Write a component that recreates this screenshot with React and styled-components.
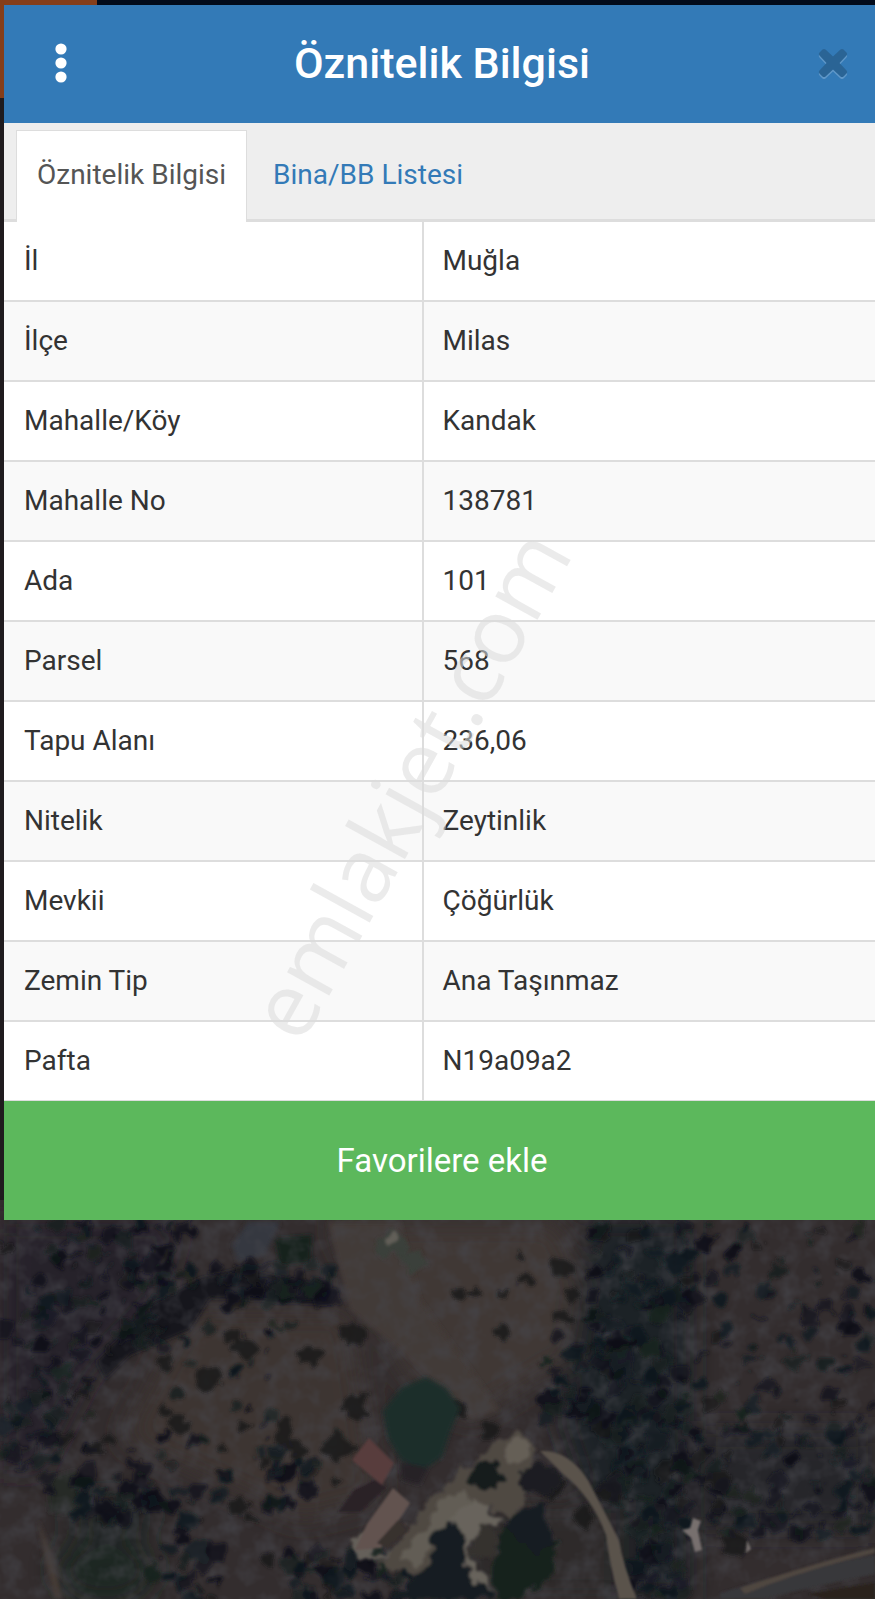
import React from "react";
import styled, { createGlobalStyle } from "styled-components";

const GlobalStyle = createGlobalStyle`
  *, *::before, *::after { box-sizing: border-box; }
  body {
    margin: 0;
    background: #1d191c;
    color: #333;
    font-family: Roboto, "Open Sans", sans-serif;
    font-size: 28px;
    line-height: 40px;
  }
`;

const Page = styled.div`
  position: relative;
  min-height: 100vh;
  overflow: hidden;
  padding: 5px 0 0 4px;
`;

const MapLayer = styled.svg`
  position: absolute;
  inset: 0;
  width: 100%;
  height: 100%;
`;

const Dialog = styled.section`
  position: relative;
  margin-right: -5px;
  background: #fff;
`;

const Header = styled.header`
  display: grid;
  grid-template-columns: 114px 1fr 114px;
  align-items: center;
  height: 118px;
  padding-bottom: 2px;
  background: #337ab7;
`;

const IconButton = styled.button`
  display: flex;
  justify-content: ${(p) => p.$align};
  align-items: center;
  height: 100%;
  padding: 0 32px 0 50px;
  border: 0;
  background: none;
  color: #fff;
  cursor: pointer;
`;

const Title = styled.h1`
  margin: 0;
  color: #fff;
  font-size: 43px;
  font-weight: 500;
  line-height: 56px;
  text-align: center;
`;

const TabBar = styled.div`
  display: flex;
  gap: 5px;
  height: 99px;
  padding: 7px 12px 0;
  background: #eee;
  border-bottom: 3px solid #ddd;
`;

const Tab = styled.button`
  height: ${(p) => (p.$active ? "92px" : "89px")};
  padding: 0 20px ${(p) => (p.$active ? "3px" : "0")};
  border: 1px solid ${(p) => (p.$active ? "#ddd" : "transparent")};
  border-bottom: 0;
  background: ${(p) => (p.$active ? "#fff" : "transparent")};
  color: ${(p) => (p.$active ? "#555" : "#337ab7")};
  font: inherit;
  white-space: nowrap;
  cursor: pointer;
`;

const Table = styled.table`
  width: 100%;
  table-layout: fixed;
  border-collapse: separate;
  border-spacing: 0;
`;

const Label = styled.th`
  width: 48%;
  height: 80px;
  padding: 0 20px;
  border-right: 2px solid #ddd;
  font-weight: 400;
  text-align: left;
`;

const Value = styled.td`
  padding: 0 18px;
`;

const Row = styled.tr`
  background: #fff;
  &:nth-child(even) { background: #f9f9f9; }
  > * { border-bottom: 2px solid #ddd; }
  &:last-child > * { height: 79px; border-bottom: 1px solid #ddd; }
`;

const FavoriteButton = styled.button`
  display: block;
  width: 100%;
  height: 119px;
  border: 0;
  background: #5cb85c;
  color: #fff;
  font-family: inherit;
  font-size: 33px;
  line-height: 48px;
  cursor: pointer;
`;

const Watermark = styled.span`
  position: absolute;
  left: 46%;
  top: 778px;
  color: rgba(220, 220, 220, 0.56);
  font-family: "Open Sans", sans-serif;
  font-size: 90px;
  line-height: 90px;
  white-space: nowrap;
  pointer-events: none;
  transform: translate(-50%, -50%) rotate(-61deg);
`;

const attributes = [
  ["İl", "Muğla"],
  ["İlçe", "Milas"],
  ["Mahalle/Köy", "Kandak"],
  ["Mahalle No", "138781"],
  ["Ada", "101"],
  ["Parsel", "568"],
  ["Tapu Alanı", "236,06"],
  ["Nitelik", "Zeytinlik"],
  ["Mevkii", "Çöğürlük"],
  ["Zemin Tip", "Ana Taşınmaz"],
  ["Pafta", "N19a09a2"],
];

function random(seed) {
  let s = seed;
  return () => {
    s = (s * 16807) % 2147483647;
    return s / 2147483647;
  };
}

// Wooded zones: x, y, width, height, number of trees, largest radius
const groves = [
  [0, 1222, 175, 125, 85, 8],
  [0, 1340, 90, 150, 50, 9],
  [125, 1225, 70, 60, 24, 8],
  [210, 1265, 125, 40, 46, 10],
  [80, 1460, 85, 60, 34, 10],
  [150, 1490, 70, 109, 36, 10],
  [265, 1450, 50, 60, 24, 9],
  [290, 1550, 130, 49, 60, 10],
  [590, 1222, 100, 110, 62, 10],
  [545, 1335, 120, 90, 75, 11],
  [600, 1410, 90, 100, 58, 10],
  [690, 1225, 185, 140, 60, 9],
  [670, 1355, 205, 90, 52, 9],
  [690, 1430, 185, 110, 75, 9],
  [625, 1500, 70, 99, 45, 10],
  [85, 1320, 210, 160, 42, 7],
];

const makeTrees = () => {
  const r = random(4217);
  return groves.flatMap(([x, y, w, h, count, size]) =>
    Array.from({ length: count }, () => {
      const rx = 2 + r() * size;
      return {
        cx: x + r() * w,
        cy: y + r() * h,
        rx,
        ry: rx * (0.45 + r() * 0.5),
        angle: -60 + r() * 80,
        fill: ["#0e1119", "#10161d", "#151c23", "#111319", "#18211f"][Math.floor(r() * 5)],
        opacity: 0.5 + r() * 0.45,
      };
    })
  );
};

const trees = makeTrees();

// Single trees in the clearings: x, y, rx, ry
const lone = [
  [164, 1364, 6, 8], [231, 1337, 7, 6], [244, 1348, 13, 11], [208, 1380, 14, 12],
  [310, 1356, 13, 10], [353, 1334, 15, 10], [355, 1406, 11, 13], [338, 1447, 16, 13],
  [245, 1427, 9, 5], [224, 1448, 5, 5], [221, 1473, 5, 4], [264, 1463, 6, 4],
  [285, 1434, 9, 16], [297, 1449, 8, 11], [239, 1507, 9, 9], [252, 1519, 7, 4],
  [337, 1481, 6, 4], [268, 1560, 7, 6], [63, 1439, 8, 6], [96, 1448, 8, 7],
  [178, 1425, 11, 9], [166, 1412, 7, 5], [108, 1439, 6, 5], [83, 1395, 9, 5],
  [561, 1267, 12, 11], [571, 1294, 9, 6], [563, 1317, 11, 6], [526, 1280, 7, 6],
  [519, 1256, 5, 4], [501, 1332, 8, 6], [458, 1409, 9, 9], [490, 1430, 7, 9],
  [552, 1486, 12, 13], [584, 1517, 9, 11],
  [609, 1492, 14, 10], [718, 1480, 12, 11], [718, 1506, 9, 8], [736, 1544, 12, 13],
  [459, 1294, 7, 5], [475, 1293, 7, 5], [504, 1293, 5, 4], [413, 1395, 5, 3],
];

function SatelliteMap() {
  return (
    <MapLayer viewBox="0 0 875 1599" preserveAspectRatio="xMinYMin slice" aria-hidden="true">
      <defs>
        <filter id="edge">
          <feGaussianBlur stdDeviation="1" />
        </filter>
        <filter id="soft" x="-20%" y="-20%" width="140%" height="140%">
          <feGaussianBlur stdDeviation="2" />
        </filter>
        <filter id="leaf" x="-5%" y="-5%" width="110%" height="110%">
          <feTurbulence type="fractalNoise" baseFrequency="0.09" numOctaves="2" seed="7" result="n" />
          <feDisplacementMap
            in="SourceGraphic"
            in2="n"
            scale="16"
            xChannelSelector="R"
            yChannelSelector="G"
          />
          <feGaussianBlur stdDeviation="1.7" />
        </filter>
        <filter id="haze" x="-50%" y="-50%" width="200%" height="200%">
          <feGaussianBlur stdDeviation="14" />
        </filter>
        <filter id="grain" x="0" y="0" width="100%" height="100%">
          <feTurbulence type="fractalNoise" baseFrequency="0.05" numOctaves="3" seed="12" />
          <feColorMatrix values="0 0 0 0 0.06  0 0 0 0 0.06  0 0 0 0 0.07  1.4 0 0 0 -0.58" />
        </filter>
      </defs>
      <rect width="875" height="1599" fill="#1f1b1e" />
      <rect y="1200" width="875" height="399" fill="#332d2e" />
      <g filter="url(#haze)">
        <path d="M0 1220H180L160 1300L90 1370L40 1470H0Z" fill="#25242a" />
        <path d="M330 1220H560L600 1340L470 1420L410 1380Z" fill="#403835" />
        <path d="M190 1310H350L380 1500L300 1520L120 1440Z" fill="#3d3432" />
        <path d="M590 1220H690V1599H620L560 1420Z" fill="#1c2127" />
        <path d="M700 1430H875V1530H700Z" fill="#27252b" />
        <path d="M470 1500H620V1599H440Z" fill="#2f2b2b" />
        <ellipse cx="105" cy="1570" rx="50" ry="35" fill="#1b2622" />
        <ellipse cx="110" cy="1515" rx="45" ry="20" fill="#1a2221" />
      </g>
      <g filter="url(#soft)">
        <path d="M328 1222H400L420 1300L500 1410L470 1420L400 1350L350 1310Z" fill="#433b38" />
        <path d="M248 1222H280L265 1255L238 1262L232 1245Z" fill="#353941" />
        <path d="M275 1238L312 1235L310 1262L280 1265Z" fill="#19241f" />
        <path d="M96 1362L150 1305L200 1278L240 1268L340 1290L330 1305L210 1298L190 1330L130 1355L105 1380Z" fill="#13191d" />
        <path d="M50 1478L75 1470L82 1492L72 1515L48 1512Z" fill="#272a27" />
        <path d="M38 1520L55 1560L62 1599H54L45 1560Z" fill="#453a36" />
      </g>
      <rect y="1200" width="875" height="399" filter="url(#grain)" />
      <g filter="url(#leaf)">
        <path d="M376 1238L392 1230L408 1240L402 1250L420 1252L428 1266L408 1272L398 1256L378 1254Z" fill="#3a403a" />
        <path d="M386 1236L394 1233L396 1244L388 1246Z" fill="#625f58" />
        {trees.map((t, i) => (
          <ellipse
            key={i}
            cx={t.cx}
            cy={t.cy}
            rx={t.rx}
            ry={t.ry}
            fill={t.fill}
            opacity={t.opacity}
            transform={`rotate(${t.angle} ${t.cx} ${t.cy})`}
          />
        ))}
        {lone.map(([x, y, rx, ry]) => (
          <ellipse key={`${x}-${y}`} cx={x} cy={y} rx={rx} ry={ry} fill="#17191c" opacity="0.82" />
        ))}
      </g>
      <g filter="url(#soft)">
        <path d="M383 1411L401 1388L426 1377L446 1388L460 1408L450 1432L442 1457L424 1470L401 1460L388 1438Z" fill="#1b2d2b" />
        <path d="M400 1462L428 1468L420 1485L402 1480Z" fill="#252227" />
      </g>
      <g filter="url(#leaf)">
        <path d="M497 1442L519 1432L536 1448L531 1468L526 1503L511 1519L488 1507L466 1535L442 1547L427 1572L409 1574L379 1566L398 1543L430 1500L464 1470Z" fill="#4f4943" />
        <path d="M445 1495L463 1490L470 1508L448 1525L430 1545L418 1566L400 1560L424 1530Z" fill="#625d55" />
        <path d="M502 1446L520 1438L530 1450L520 1460L504 1462Z" fill="#655e56" />
        <path d="M471 1499L502 1521L487 1525L468 1547L474 1568L491 1581L489 1590L468 1576L462 1530L443 1528Z" fill="#68635c" />
        <path d="M483 1523L500 1530L492 1560L468 1555Z" fill="#34312d" />
        <ellipse cx="486" cy="1475" rx="17" ry="14" fill="#171b1f" />
        <ellipse cx="540" cy="1480" rx="21" ry="15" fill="#1b1f23" />
        <path d="M432 1532L460 1520L466 1572L490 1591V1599H390L430 1565Z" fill="#151b20" />
        <path d="M503 1525L558 1540L551 1575L520 1599H494L496 1560Z" fill="#16241f" />
        <path d="M524 1508L541 1500L555 1544L536 1555L503 1524Z" fill="#171b20" />
        <path d="M348 1542L369 1529L371 1557L395 1552L378 1562L365 1562Z" fill="#65605a" />
      </g>
      <g filter="url(#edge)">
        <path d="M540 1451Q568 1449 588 1480Q605 1513 619 1540Q623 1565 637 1599H619Q610 1566 606 1535Q592 1497 562 1473Z" fill="#5a524b" />
        <path d="M720 1593Q790 1570 875 1555V1574Q800 1590 763 1599H720Z" fill="#39373a" />
        <path d="M740 1588Q810 1564 875 1548V1553Q800 1571 745 1594Z" fill="#4f4640" />
        <path d="M808 1594L875 1583V1599H825Z" fill="#2a211f" />
        <path d="M369 1438L394 1463L382 1485L352 1460Z" fill="#583c3c" />
        <path d="M354 1490L375 1480L386 1488L360 1512L338 1512Z" fill="#2b2228" />
        <path d="M393 1488L410 1503L381 1548L355 1550L367 1524Z" fill="#62534f" />
        <path d="M398 1520L409 1530L388 1548L377 1543Z" fill="#38302f" />
        <path d="M693 1518L701 1521L698 1530L702 1550L695 1552L691 1538L682 1530L690 1528Z" fill="#77706e" />
        <path d="M747 1540L751 1549L746 1553Z" fill="#746e6c" />
      </g>
      <rect width="97" height="98" fill="#853e1a" />
      <rect x="97" width="778" height="8" fill="#020b1b" />
    </MapLayer>
  );
}

function DotsIcon() {
  return (
    <svg width="14" height="40" viewBox="0 0 14 40" fill="currentColor" aria-hidden="true">
      <circle cx="7" cy="6" r="5.6" />
      <circle cx="7" cy="20" r="5.6" />
      <circle cx="7" cy="34" r="5.6" />
    </svg>
  );
}

function CrossIcon() {
  const cross =
    "M7.5 1.5L15 8.5L22.5 1.5Q24 0.5 25.5 1.5L28.5 4.5Q30 6 28.5 7.5L21.5 15L28.5 22.5Q30 24 28.5 25.5L25.5 28.5Q24 29.5 22.5 28.5L15 21.5L7.5 28.5Q6 29.5 4.5 28.5L1.5 25.5Q0 24 1.5 22.5L8.5 15L1.5 7.5Q0 6 1.5 4.5L4.5 1.5Q6 0.5 7.5 1.5Z";
  return (
    <svg width="30" height="34" viewBox="0 -2 30 34" aria-hidden="true">
      <path d={cross} fill="#5f97c8" transform="translate(0 2)" />
      <path d={cross} fill="#2a6495" />
    </svg>
  );
}

export default function App() {
  return (
    <>
      <GlobalStyle />
      <Page>
        <SatelliteMap />
        <Dialog aria-labelledby="dialog-title">
          <Header>
            <IconButton type="button" aria-label="Menü" $align="flex-start">
              <DotsIcon />
            </IconButton>
            <Title id="dialog-title">Öznitelik Bilgisi</Title>
            <IconButton type="button" aria-label="Kapat" $align="flex-end">
              <CrossIcon />
            </IconButton>
          </Header>
          <TabBar role="tablist">
            <Tab type="button" role="tab" aria-selected="true" $active>
              Öznitelik Bilgisi
            </Tab>
            <Tab type="button" role="tab" aria-selected="false">
              Bina/BB Listesi
            </Tab>
          </TabBar>
          <Table>
            <tbody>
              {attributes.map(([label, value]) => (
                <Row key={label}>
                  <Label scope="row">{label}</Label>
                  <Value>{value}</Value>
                </Row>
              ))}
            </tbody>
          </Table>
          <FavoriteButton type="button">Favorilere ekle</FavoriteButton>
          <Watermark>emlakjet.com</Watermark>
        </Dialog>
      </Page>
    </>
  );
}
